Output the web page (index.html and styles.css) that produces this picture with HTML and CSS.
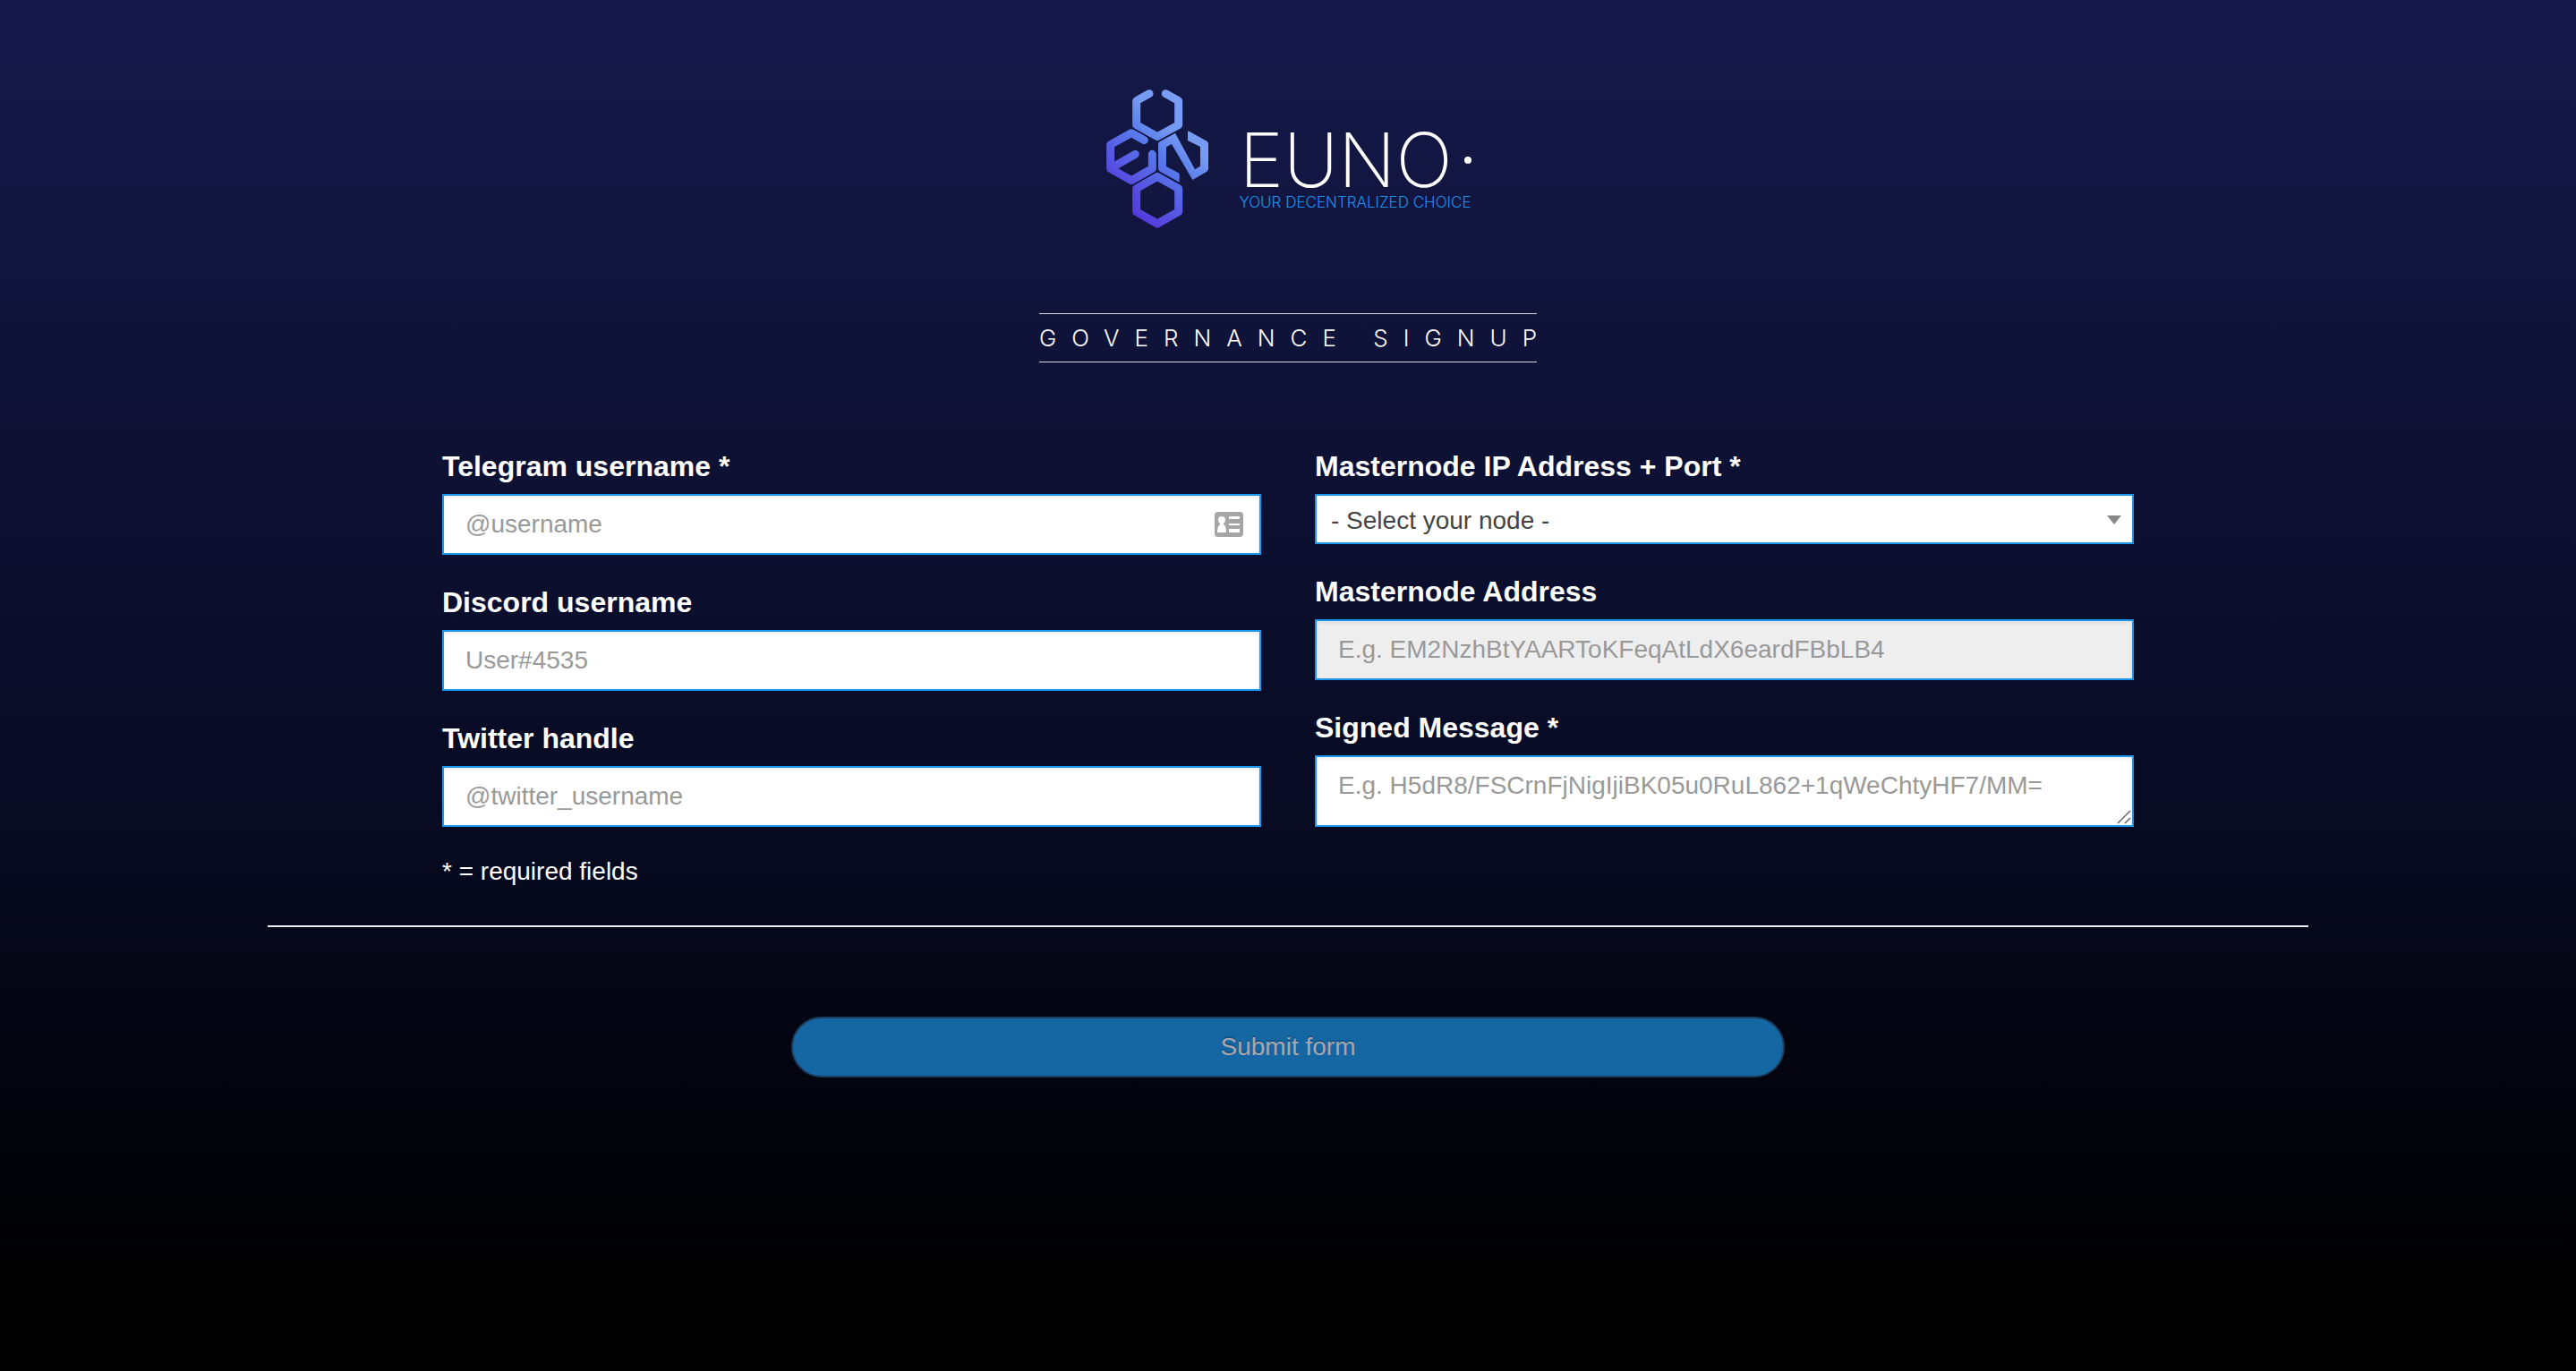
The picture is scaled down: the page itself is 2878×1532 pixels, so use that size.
FILE: index.html
```html
<!DOCTYPE html>
<html lang="en">
<head>
<meta charset="utf-8">
<meta name="viewport" content="width=device-width, initial-scale=1">
<title>Euno Governance Signup</title>
<link rel="stylesheet" href="styles.css">
</head>
<body>
<main class="page">
  <header class="header">
    <div class="brand">
      <svg class="brand-mark" viewBox="48 54 354 474" aria-hidden="true">
        <defs>
          <linearGradient id="mark" gradientUnits="userSpaceOnUse" x1="90" y1="430" x2="340" y2="150">
            <stop offset="0" stop-color="#5538dc"/>
            <stop offset=".55" stop-color="#587aeb"/>
            <stop offset=".8" stop-color="#759af2"/>
            <stop offset="1" stop-color="#7a9df3"/>
          </linearGradient>
        </defs>
        <g fill="none" stroke="url(#mark)" stroke-width="27" stroke-linecap="round" stroke-linejoin="round">
          <path d="M198 74 155 98V179L225 218 296 179V98L253 74"/>
          <path d="M181 230 138 206 68 245V325L138 365 208 325V277"/>
          <path d="M151 277 76 320"/>
          <path d="M225 352 296 392V470L225 510 155 470V392Z"/>
        </g>
        <path fill="url(#mark)" d="M285 206 351 328 369 317V252L327 231V200Q329 198 333 201L391 233Q396 236 396 241V327Q396 331 391 335L343 363 273 243 255 253V318L299 341V371L234 335Q228 331 228 325V243Q228 239 233 235Z"/>
        <path fill="none" stroke="#141743" stroke-width="3" d="M139 188 225 235 285 204M225 335V235M140 383 225 334 310 382"/>
      </svg>
      <div class="brand-text">
        <div class="wordmark">EUNO<span class="wordmark-dot"></span></div>
        <div class="tagline">YOUR DECENTRALIZED CHOICE</div>
      </div>
    </div>
    <h1 class="title"><span class="title-text">GOVERNANCE SIGNUP</span></h1>
  </header>

  <form class="form">
    <div class="columns">
      <div class="column">
        <div class="field">
          <label class="label" for="telegram">Telegram username *</label>
          <div class="control">
            <input class="input" id="telegram" type="text" placeholder="@username">
            <svg class="card-icon" viewBox="0 0 32 28" aria-hidden="true">
              <rect width="32" height="28" rx="4" fill="#a5a5a5"/>
              <g fill="#fff">
                <ellipse cx="8" cy="9" rx="4" ry="4"/>
                <path d="M6 11h4v3c2 1 3 4 3 9H3c0-5 1-8 3-9z"/>
                <path d="M16 5h12v3H16zM16 13h12v2H16zM16 19h12v4H16z"/>
              </g>
            </svg>
          </div>
        </div>
        <div class="field">
          <label class="label" for="discord">Discord username</label>
          <input class="input" id="discord" type="text" placeholder="User#4535">
        </div>
        <div class="field">
          <label class="label" for="twitter">Twitter handle</label>
          <input class="input" id="twitter" type="text" placeholder="@twitter_username">
        </div>
        <p class="note">* = required fields</p>
      </div>
      <div class="column">
        <div class="field">
          <label class="label" for="node">Masternode IP Address + Port *</label>
          <div class="control">
            <select class="select" id="node"><option>- Select your node -</option></select>
            <svg class="arrow-icon" viewBox="0 0 16 10" aria-hidden="true"><path fill="#888" d="M0 0H16L8 10Z"/></svg>
          </div>
        </div>
        <div class="field">
          <label class="label" for="address">Masternode Address</label>
          <input class="input" id="address" type="text" placeholder="E.g. EM2NzhBtYAARToKFeqAtLdX6eardFBbLB4" disabled>
        </div>
        <div class="field">
          <label class="label" for="message">Signed Message *</label>
          <div class="control">
            <textarea class="input textarea" id="message" placeholder="E.g. H5dR8/FSCrnFjNigIjiBK05u0RuL862+1qWeChtyHF7/MM="></textarea>
            <svg class="grip-icon" viewBox="0 0 16 16" aria-hidden="true"><path stroke="#555" stroke-width="1.3" d="M1 15 15 1M9 15 15 9"/></svg>
          </div>
        </div>
      </div>
    </div>
    <hr class="divider">
    <button class="submit" type="submit" disabled>Submit form</button>
  </form>
</main>
</body>
</html>
```
FILE: styles.css
```css
* {
  box-sizing: border-box;
}

html {
  background: #000;
}

body {
  margin: 0;
  min-height: 100vh;
  background: linear-gradient(#15194a, #080b23 58%, #000 94%);
  color: #fff;
  font-family: "Liberation Sans", Arial, sans-serif;
  font-size: 28px;
  line-height: 40px;
}

.page {
  max-width: 2280px;
  margin: 0 auto;
  padding: 98px 0;
}

.header {
  display: flex;
  flex-direction: column;
  align-items: center;
  font-family: Inter, sans-serif;
}

.brand {
  display: flex;
  gap: 32px;
}

.brand-mark {
  display: block;
  width: 118px;
  height: 158px;
}

.brand-text {
  padding-top: 51px;
}

.wordmark {
  display: flex;
  align-items: center;
  justify-content: space-between;
  font-size: 84px;
  font-weight: 200;
  line-height: 60px;
}

.wordmark-dot {
  width: 8px;
  height: 8px;
  border-radius: 50%;
  background: #fff;
}

.tagline {
  padding-top: 5px;
  color: #1c93ea;
  font-size: 17px;
  font-weight: 300;
  line-height: 24px;
}

.title {
  margin: 94px 0 0;
  border: 1px solid #d8d9e0;
  border-width: 1px 0;
  font-size: 26px;
  font-weight: 300;
  line-height: 53px;
  white-space: nowrap;
}

.title-text {
  margin-right: -17px;
  letter-spacing: 17px;
}

.form {
  padding-top: 93px;
}

.columns {
  display: grid;
  grid-template-columns: 1fr 1fr;
  gap: 60px;
  max-width: 1890px;
  margin: 0 auto;
}

.column {
  display: flex;
  flex-direction: column;
  gap: 30px;
}

.label {
  display: block;
  margin-bottom: 8px;
  font-size: 32px;
  font-weight: 700;
  line-height: 46px;
}

.control {
  position: relative;
}

.input,
.select {
  display: block;
  width: 100%;
  height: 68px;
  margin: 0;
  padding: 12px 24px;
  border: 2px solid #1c96ee;
  border-radius: 0;
  background: #fff;
  box-shadow: inset 0 2px 4px rgba(0, 0, 0, .08);
  color: #444;
  font: inherit;
}

.input::placeholder {
  color: #999;
  opacity: 1;
}

.input:disabled {
  background: #eee;
}

.textarea {
  height: 80px;
  overflow: hidden;
  resize: none;
}

.select {
  height: 56px;
  padding: 8px 16px 4px;
  appearance: none;
  box-shadow: none;
}

.card-icon,
.arrow-icon,
.grip-icon {
  position: absolute;
  pointer-events: none;
}

.card-icon {
  top: 20px;
  right: 20px;
  width: 32px;
  height: 28px;
}

.arrow-icon {
  top: 24px;
  right: 14px;
  width: 16px;
  height: 10px;
}

.grip-icon {
  right: 3px;
  bottom: 3px;
  width: 16px;
  height: 16px;
}

.note {
  margin: 0;
}

.divider {
  height: 2px;
  margin: 40px 0 100px;
  border: 0;
  background: #eee;
}

.submit {
  display: block;
  width: 100%;
  max-width: 1110px;
  height: 68px;
  margin: 0 auto;
  border: 2px solid #1b3e5e;
  border-radius: 34px;
  background: #1567a4;
  color: #a6a8ad;
  font: inherit;
  text-shadow: 0 -2px 0 rgba(0, 0, 0, .2);
}
```
